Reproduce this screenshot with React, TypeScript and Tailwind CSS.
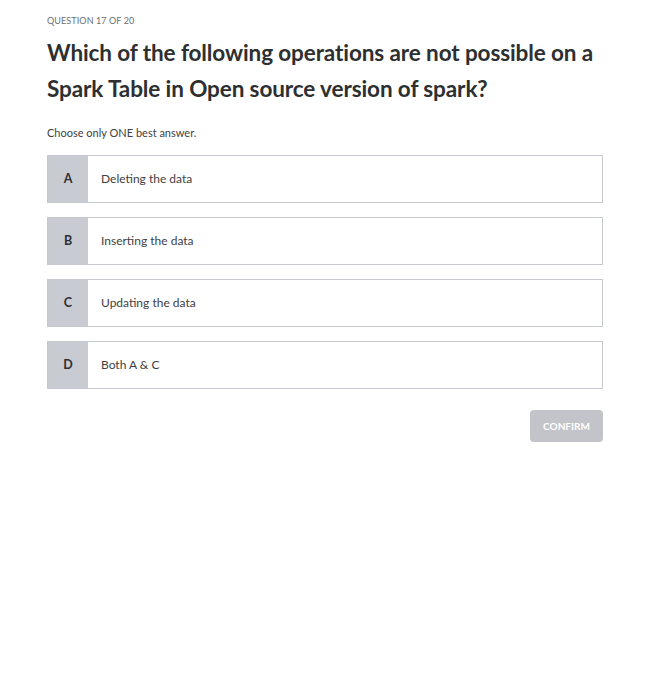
const options = [
  { key: "A", label: "Deleting the data" },
  { key: "B", label: "Inserting the data" },
  { key: "C", label: "Updating the data" },
  { key: "D", label: "Both A & C" },
];

const App = () => {
  return (
    <div
      className="min-h-[677px] w-full bg-white pl-[47px] pr-[43px] pt-[15px] text-[#2d2f31]"
      style={{ fontFamily: "Lato, 'Open Sans', sans-serif" }}
    >
      <div className="text-[9px] leading-[12px] text-[#6a6f73] tracking-[0.1px]">
        QUESTION 17 OF 20
      </div>

      <h1 className="mt-[8px] text-[22.5px] font-bold leading-[36px] tracking-[-0.1px] text-[#2d2f31]">
        Which of the following operations are not possible on a Spark Table in Open source version of spark?
      </h1>

      <p className="mt-[19px] text-[11px] leading-[14px] text-[#3e4143]">
        Choose only ONE best answer.
      </p>

      <div className="mt-[15px] flex flex-col gap-[14px]">
        {options.map((o) => (
          <div
            key={o.key}
            className="flex h-[48px] border border-[#c6c8d1] bg-white"
          >
            <div className="flex w-[40px] items-center justify-center bg-[#c9cbd3] text-[12.5px] font-bold text-[#2d2f31]">
              {o.key}
            </div>
            <div className="flex items-center pl-[13px] text-[12px] text-[#3e4143]">
              {o.label}
            </div>
          </div>
        ))}
      </div>

      <div className="mt-[21px] flex justify-end">
        <button className="h-[32px] w-[73px] rounded-[4px] bg-[#c3c4ca] text-[10px] font-bold text-white">
          CONFIRM
        </button>
      </div>
    </div>
  );
};

export default App;
